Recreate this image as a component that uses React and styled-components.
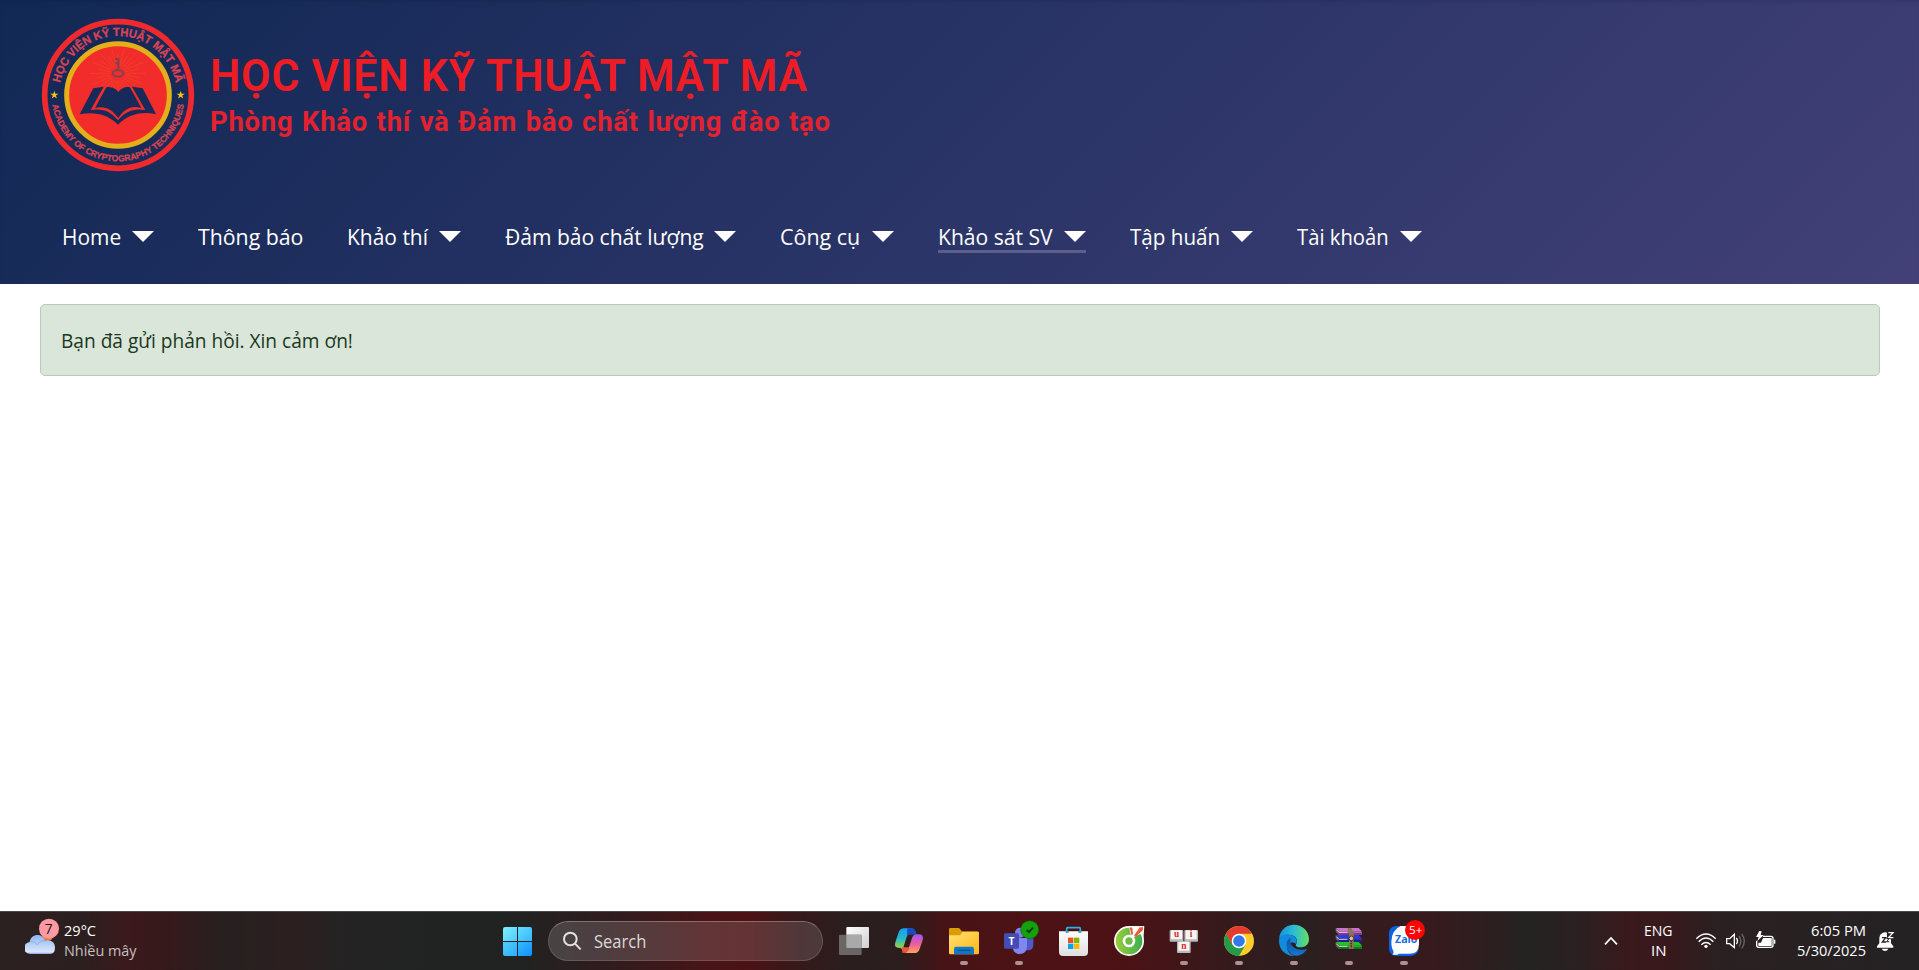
import React, { useLayoutEffect, useRef, useState } from "react";
import styled, { createGlobalStyle } from "styled-components";

const GlobalStyle = createGlobalStyle`
  * { box-sizing: border-box; }
  html, body, #root { height: 100%; }
  body {
    margin: 0;
    overflow: hidden;
    background: #fff;
    font-family: "Open Sans", "Noto Sans", sans-serif;
  }
`;

const Page = styled.div`
  height: 970px;
  display: flex;
  flex-direction: column;
`;

/* A line of text condensed or widened to an exact width. */
const FitBox = styled.span`
  display: inline-block;
  flex: none;
  width: ${(p) => p.$w}px;
  white-space: nowrap;
`;
const FitInner = styled.span`
  display: inline-block;
  transform-origin: left;
`;
function Fit({ w, children }) {
  const ref = useRef(null);
  const [scale, setScale] = useState(1);
  useLayoutEffect(() => {
    if (ref.current) setScale(w / ref.current.offsetWidth);
  }, [w]);
  return (
    <FitBox $w={w}>
      <FitInner ref={ref} style={{ transform: `scaleX(${scale})` }}>
        {children}
      </FitInner>
    </FitBox>
  );
}

const Header = styled.header`
  flex: none;
  height: 284px;
  padding: 10px 30px 0;
  display: flex;
  flex-direction: column;
  background: linear-gradient(135deg, #112855, #424077);
  box-shadow: inset 0 5px 5px -4px rgba(0, 0, 0, 0.14);
`;
const Brand = styled.div`
  display: flex;
  height: 170px;
`;
const Seal = styled.svg`
  flex: none;
  width: 180px;
  height: 170px;
`;
const BrandText = styled.div`
  display: flex;
  flex-direction: column;
  padding-top: 38px;
  font-family: Roboto, sans-serif;
  color: #ee1c25;
`;
const Title = styled.div`
  font-size: 45px;
  line-height: 56px;
  font-weight: 600;
  letter-spacing: 0.8px;
`;
const Subtitle = styled.div`
  font-size: 28.5px;
  line-height: 34px;
  margin-top: 1px;
  font-weight: 700;
  letter-spacing: 0.8px;
  word-spacing: 1px;
  color: #e4222f;
`;
const Nav = styled.nav`
  display: flex;
  gap: 44px;
  padding: 42px 0 0 32px;
`;
const NavItem = styled.a`
  display: flex;
  align-items: center;
  justify-content: space-between;
  width: ${(p) => p.$w}px;
  height: 31px;
  border-bottom: 3px solid ${(p) => (p.$active ? "#5c5f8d" : "transparent")};
  color: #fff;
  font-size: 22px;
  line-height: 28px;
`;
const Caret = styled.i`
  border: 11px solid transparent;
  border-top: 11px solid #fff;
  border-bottom: 0;
`;

const Main = styled.main`
  flex: 1;
  padding: 20px 39px 0 40px;
`;
const Alert = styled.div`
  height: 72px;
  padding: 0 20px;
  display: flex;
  align-items: center;
  border: 1px solid #b5cdb7;
  border-radius: 5px;
  background: #dae6da;
  color: #1b3820;
  font-size: 19.5px;
`;

const Taskbar = styled.footer`
  flex: none;
  height: 59px;
  display: flex;
  border-top: 1px solid #474a45;
  color: #fff;
  background: linear-gradient(
    90deg,
    #2b2120 0, #2c1f1f 80px, #3b191c 130px, #34191b 170px, #272020 225px,
    #2c1f20 290px, #232323 350px, #212222 520px, #301c1e 610px, #491417 710px,
    #4c1215 750px, #35191b 800px, #2a1e1e 850px, #2c1d1e 900px, #471316 945px,
    #4d1215 1040px, #4b1216 1130px, #3d171a 1190px, #331b1d 1240px,
    #2b1f20 1310px, #371a1d 1390px, #371a1d 1430px, #242222 1530px,
    #2a2021 1580px, #3b191c 1630px, #37191c 1670px, #2a2022 1720px,
    #242223 1919px
  );
`;
const Weather = styled.div`
  display: flex;
  width: 503px;
  padding-left: 25px;
`;
const WeatherIcon = styled.svg`
  width: 39px;
  height: 58px;
`;
const Lines = styled.div`
  display: flex;
  flex-direction: column;
  align-items: ${(p) => p.$align};
  padding-top: 8px;
  font-size: 15px;
  line-height: 20px;
`;
const Muted = styled.span`
  color: #c6c0c0;
`;
const Start = styled.div`
  display: grid;
  grid-template-columns: 14px 14px;
  grid-template-rows: 14px 14px;
  gap: 1px;
  padding-top: 15px;
  width: 45px;
`;
const Pane = styled.i`
  background: ${(p) => p.$bg};
  border-radius: ${(p) => p.$r};
`;
const Search = styled.div`
  display: flex;
  align-items: center;
  width: 275px;
  height: 40px;
  margin: 9px 3px 0 0;
  padding-left: 14px;
  gap: 12px;
  border: 1px solid #ffffff22;
  border-top-color: #ffffff44;
  border-radius: 20px;
  background: linear-gradient(90deg, #ffffff28, #ffffff22);
  color: #ded8d8;
  font-size: 17.5px;
`;
const Apps = styled.div`
  display: flex;
`;
const AppIcon = styled.svg`
  width: 55px;
  height: 59px;
  margin-top: -1px;
`;
const Tray = styled.div`
  display: flex;
  margin-left: 149px;
`;
const TrayIcons = styled.svg`
  width: ${(p) => p.$w}px;
  height: 59px;
  margin-top: -1px;
`;

const NAV = [
  ["Home", 91.5, 59],
  ["Thông báo", 105.5, 105.5],
  ["Khảo thí", 113.5, 81],
  ["Đảm bảo chất lượng", 231.5, 199],
  ["Công cụ", 114, 80],
  ["Khảo sát SV", 148, 115],
  ["Tập huấn", 123, 90],
  ["Tài khoản", 125, 92],
];

const star = (x, y) => {
  const pts = [];
  for (let i = 0; i < 10; i++) {
    const r = i % 2 ? 5 : 13;
    const a = (Math.PI * i) / 5 - Math.PI / 2;
    pts.push(`${x + r * Math.cos(a)},${y + r * Math.sin(a)}`);
  }
  return pts.join(" ");
};

function AcademySeal() {
  return (
    <Seal viewBox="0 0 540 510">
      <defs>
        <path id="arcTop" d="M87 255 A177 177 0 0 1 441 255" />
        <path id="arcBottom" d="M65 255 A199 199 0 0 0 463 255" />
      </defs>
      <circle cx="264" cy="255" r="220" fill="none" stroke="#ef2a2e" strokeWidth="17" />
      <circle cx="264" cy="255" r="154" fill="#f12c2b" stroke="#e3b01b" strokeWidth="15" />
      <g stroke="#ee5a2b" strokeWidth="2" opacity=".6">
        {Array.from({ length: 28 }, (_, i) => {
          const a = (i * Math.PI) / 14;
          const r = i % 2 ? 65 : 85;
          return (
            <line
              key={i}
              x1={264 + 24 * Math.cos(a)}
              y1={190 + 24 * Math.sin(a)}
              x2={264 + r * Math.cos(a)}
              y2={190 + r * 0.9 * Math.sin(a)}
            />
          );
        })}
      </g>
      <g fill="none" stroke="#7d4450" strokeWidth="6">
        <ellipse cx="264" cy="190" rx="16" ry="10" />
        <path d="M265 182V146M266 147H255M265 160H256" />
      </g>
      <path
        fill="#182a59"
        d="M229 232C244 228 258 236 265 246C272 235 288 228 300 232L334 294C304 284 282 297 265 324C246 298 224 286 195 294Z"
      />
      <path
        fill="#182a59"
        d="M190 235L221 230L182 300C220 294 244 306 264 331C286 304 312 294 346 300L306 230L338 235L378 313C334 302 292 314 264 344C236 314 194 304 149 313Z"
      />
      <g
        fill="#d94455"
        stroke="#d94455"
        strokeWidth="0.9"
        fontFamily="Liberation Sans, sans-serif"
        fontWeight="700"
      >
        <text fontSize="35">
          <textPath href="#arcTop" startOffset="36" textLength="484" lengthAdjust="spacingAndGlyphs">
            HỌC VIỆN KỸ THUẬT MẬT MÃ
          </textPath>
        </text>
        <text fontSize="26">
          <textPath href="#arcBottom" startOffset="29" textLength="568" lengthAdjust="spacingAndGlyphs">
            ACADEMY OF CRYPTOGRAPHY TECHNIQUES
          </textPath>
        </text>
      </g>
      <polygon points={star(73, 255)} fill="#f5c21a" />
      <polygon points={star(452, 255)} fill="#f5c21a" />
    </Seal>
  );
}

const Running = ({ x }) => (
  <rect x={x - 12} y="168" width="24" height="12" rx="6" fill="#ae9093" />
);

function AppIcons() {
  return (
    <Apps>
      <AppIcon viewBox="18 18 165 177">
        <defs>
          <linearGradient id="tv" x2="1" y2="1">
            <stop stopColor="#fff" /><stop offset="1" stopColor="#cfcfcf" />
          </linearGradient>
        </defs>
        <rect x="79" y="66" width="68" height="63" rx="3" fill="url(#tv)" />
        <rect x="57" y="89" width="68" height="61" rx="3" fill="#6a6666" />
        <path d="M79 89H125V129H82Q79 129 79 126Z" fill="#a9a9a9" />
      </AppIcon>
      <AppIcon viewBox="183 18 165 177">
        <defs>
          <linearGradient id="cpa" x2="0" y2="1">
            <stop stopColor="#1b9cf0" /><stop offset=".4" stopColor="#22b8d0" />
            <stop offset=".7" stopColor="#7ccc5c" /><stop offset="1" stopColor="#f4cf30" />
          </linearGradient>
          <linearGradient id="cpb" x2="0" y2="1">
            <stop stopColor="#9b57f5" /><stop offset=".5" stopColor="#ec5b9c" />
            <stop offset="1" stopColor="#ffa35c" />
          </linearGradient>
        </defs>
        <path d="M262 70H275Q286 71 289 88L270 88Q262 89 259 99L247 137Q245 144 254 144Q247 143 245 131Q242 128 234 128Q222 128 226 112L236 82Q240 70 252 70Z" fill="url(#cpa)" />
        <path d="M262 70H275Q286 71 289 88L270 88Q264 88 261 94Z" fill="#1748c6" />
        <path d="M289 88H299Q312 89 308 106L298 134Q294 144 283 144H254Q262 143 266 130L276 99Q280 88 289 88Z" fill="url(#cpb)" />
        <path d="M245 127H267Q263 144 254 144Q247 143 245 127Z" fill="#f0563b" />
      </AppIcon>
      <AppIcon viewBox="348 18 165 177">
        <defs>
          <linearGradient id="fold" x2="1" y2="1">
            <stop stopColor="#ffe173" /><stop offset="1" stopColor="#fbb616" />
          </linearGradient>
        </defs>
        <path d="M387 73Q387 69 391 69H415Q419 69 422 74L425 79H472Q477 79 477 84V100H387Z" fill="#dc9c08" />
        <path d="M387 91H417Q421 91 424 86L427 81H473Q477 81 477 85V144Q477 148 473 148H391Q387 148 387 144Z" fill="url(#fold)" />
        <path d="M402 148V132Q402 125 409 125H455Q462 125 462 132V148Z" fill="#0f78c9" />
        <rect x="412" y="134" width="40" height="4" rx="2" fill="#0b4d8e" />
        <Running x={432} />
      </AppIcon>
      <AppIcon viewBox="513 18 165 177">
        <circle cx="600" cy="83" r="15" fill="#7b83eb" />
        <path d="M616 97H640V119Q640 136 624 136H612Z" fill="#5059c9" />
        <path d="M578 99H621V127Q619 147 600 147Q580 147 578 127Z" fill="#7f87ee" />
        <rect x="552" y="85" width="45" height="46" rx="4" fill="#444db5" />
        <text x="574.5" y="119" fill="#fff" fontSize="31" fontWeight="700" textAnchor="middle">T</text>
        <circle cx="629" cy="74" r="27" fill="#13a10e" stroke="#0b5f0b" strokeWidth="1.5" />
        <path d="M620 75L627 81L639 68" fill="none" stroke="#092e09" strokeWidth="5" />
        <Running x={597} />
      </AppIcon>
      <AppIcon viewBox="678 18 165 177">
        <defs>
          <linearGradient id="store" x2="0" y2="1">
            <stop stopColor="#fff" /><stop offset="1" stopColor="#dedede" />
          </linearGradient>
        </defs>
        <path d="M740 82V71Q740 68 743 68H778Q781 68 781 71V82" fill="none" stroke="#27b5ea" strokeWidth="5" />
        <path d="M717 79H804V141Q804 153 792 153H729Q717 153 717 141Z" fill="url(#store)" />
        <path d="M737 79H746V83H737ZM775 79H784V83H775Z" fill="#1688bd" />
        <rect x="744" y="98" width="16" height="16" fill="#f04f23" />
        <rect x="762" y="98" width="16" height="16" fill="#7db900" />
        <rect x="744" y="116" width="16" height="16" fill="#06a3ee" />
        <rect x="762" y="116" width="16" height="16" fill="#fdb800" />
      </AppIcon>
      <AppIcon viewBox="843 18 165 177">
        <defs>
          <linearGradient id="coc" x2="1">
            <stop stopColor="#9bcd3a" /><stop offset="1" stopColor="#3dae50" />
          </linearGradient>
        </defs>
        <circle cx="927" cy="108" r="45" fill="#fff" />
        <path d="M932 64H973L970 104H932Z" fill="#fff" />
        <circle cx="927" cy="108" r="40" fill="url(#coc)" />
        <path d="M934 100L927 64H972L968 84Z" fill="#fff" />
        <path d="M929 67L937 68L939 86L935 92ZM959 67L969 67L969 75L948 95L942 92Z" fill="#ee5a3a" />
        <circle cx="927" cy="108" r="15" fill="#6fbd46" stroke="#fff" strokeWidth="8" />
      </AppIcon>
      <AppIcon viewBox="78 18 165 177">
        {[["u", 119, 75], ["i", 163, 75], ["n", 141, 109]].map(([c, x, y]) => (
          <g key={c}>
            <rect x={x} y={y} width="41" height="35" rx="3" fill="#b9b9b9" />
            <rect x={x + 4} y={y + 1} width="33" height="27" rx="3" fill="#f5f5f5" />
            <text x={x + 20.5} y={y + 22} fontSize="28" fontWeight="700" fill="#e02a2a" textAnchor="middle" fontFamily="Liberation Serif, serif">{c}</text>
          </g>
        ))}
        <Running x={162} />
      </AppIcon>
      <AppIcon viewBox="243 18 165 177">
        <circle cx="327" cy="108" r="45" fill="#fccb2c" />
        <path d="M288 85.500A45 45 0 0 0 327 153L346.500 119.300L307.500 119.300Z" fill="#259b48" />
        <path d="M288 85.500Q305 62 327 63Q352 63 366 86H327L307 119Z" fill="#e33b2e" />
        <circle cx="327" cy="108" r="22" fill="#fff" />
        <circle cx="327" cy="108" r="17.500" fill="#2f79e8" />
        <Running x={327} />
      </AppIcon>
      <AppIcon viewBox="408 18 165 177">
        <defs>
          <linearGradient id="edgeA" x2="1">
            <stop stopColor="#168fdf" /><stop offset=".5" stopColor="#2bbdd5" />
            <stop offset="1" stopColor="#65df62" />
          </linearGradient>
          <linearGradient id="edgeB" x2="0" y2="1">
            <stop stopColor="#0b529f" /><stop offset="1" stopColor="#1477cf" />
          </linearGradient>
        </defs>
        <path d="M447 106A45 45 0 0 1 537 102C537 119 525 127 512 127C500 127 494 122 499 116C504 108 500 94 484 91C465 86 447 96 447 106Z" fill="url(#edgeA)" />
        <path d="M447 106C449 92 464 84 481 89C498 93 505 107 498 117C489 110 475 111 472 124C469 139 482 151 496 153C467 155 446 134 447 106Z" fill="#138bdc" />
        <path d="M482 98C471 103 467 116 471 128C476 144 488 151 500 152C514 150 526 142 531 131C515 138 486 134 481 111Q481 103 482 98Z" fill="url(#edgeB)" />
        <Running x={492} />
      </AppIcon>
      <AppIcon viewBox="573 18 165 177">
        {[["#c673c9", "#82397e", 69], ["#3039df", "#171b8e", 90], ["#21c427", "#0a7e13", 111]].map(([a, b, y]) => (
          <g key={y}>
            <path d={`M617 ${y}H686L695 ${y + 10}H626Z`} fill={a} />
            <path d={`M617 ${y}L626 ${y + 10}V${y + 21}L617 ${y + 12}Z`} fill="#6b5560" />
            <rect x="626" y={y + 10} width="69" height="11" fill={a} />
            <path d={`M626 ${y + 17}H695`} stroke={b} strokeWidth="5" />
            <path d={`M619 ${y + 5}L628 ${y + 14}M628 ${y + 13}H652`} stroke="#d9cfda" strokeWidth="3" />
            <path d={`M626 ${y + 21}H695`} stroke="#29152b" strokeWidth="2" />
          </g>
        ))}
        <path d="M652 69H663L671 80V132H657V82Z" fill="#8c7351" />
        <circle cx="664" cy="100" r="7" fill="#d8c69e" stroke="#4a3a20" strokeWidth="3" />
        <path d="M664 107V130" stroke="#2b2418" strokeWidth="4" strokeDasharray="4 3" />
        <Running x={657} />
      </AppIcon>
      <AppIcon viewBox="738 18 165 177">
        <path d="M812 63H796Q777 66 777 87V130Q778 153 802 153H838Q862 152 866 134Z" fill="#0b62e4" />
        <path d="M812 63H843Q866 64 867 88V119Q866 146 838 146H808Q799 151 787 149Q793 144 790 137Q784 130 784 110Q785 75 812 63Z" fill="#fff" />
        <text x="795" y="113" fontSize="29" fontWeight="700" fill="#176be5" textLength="67" lengthAdjust="spacingAndGlyphs">Zalo</text>
        <circle cx="855" cy="75" r="30" fill="#fb0404" />
        <text x="837" y="86" fontSize="31" fill="#fff" textLength="40" lengthAdjust="spacingAndGlyphs">5+</text>
        <Running x={822} />
      </AppIcon>
    </Apps>
  );
}

function SystemTray() {
  return (
    <Tray>
      <TrayIcons $w={64} viewBox="0 18 192 177">
        <path d="M75 118L93 99L111 118" fill="none" stroke="#fff" strokeWidth="5" />
      </TrayIcons>
      <Lines $align="center">
        <Fit w={29}>ENG</Fit>
        <Fit w={15}>IN</Fit>
      </Lines>
      <TrayIcons $w={124} viewBox="279 18 372 177">
        <g fill="none" stroke="#fff" strokeWidth="4">
          <path d="M349 101Q378 73 407 101M356 110Q378 88 400 110M364 119Q378 106 392 119" />
          <path d="M440 101H449L463 88V128L449 116H440Z" />
          <path d="M469 99Q476 108 469 117" />
          <path d="M477 93Q488 108 477 124M485 87Q501 108 485 130" stroke="#6b6465" />
          <path d="M549 94H573Q579 94 579 100V121Q579 127 573 127H536Q530 127 530 121V107" />
        </g>
        <circle cx="378" cy="124" r="5" fill="#fff" />
        <path d="M549 99H575V123H535V113H543ZM582 104H586V116H582ZM538 78L528 96H536L532 108L551 90H542L545 79Z" fill="#fff" />
      </TrayIcons>
      <Lines $align="flex-end">
        <Fit w={55}>6:05 PM</Fit>
        <Fit w={69}>5/30/2025</Fit>
      </Lines>
      <TrayIcons $w={53} viewBox="858 18 159 177">
        <path d="M916 82C902 83 898 92 898 104V115L891 124V128H940V124L933 115V104L922 83Z" fill="#fff" />
        <path d="M905 131H925Q922 138 915 138Q908 138 905 131Z" fill="#fff" />
        <path d="M906 98H917L907 111H919" fill="none" stroke="#242223" strokeWidth="4" />
        <rect x="921" y="78" width="22" height="24" fill="#242223" />
        <path d="M925 83H939L926 98H940" fill="none" stroke="#fff" strokeWidth="4" />
        <path d="M919 101H927L920 110H928" fill="none" stroke="#242223" strokeWidth="3" />
      </TrayIcons>
    </Tray>
  );
}

export default function App() {
  return (
    <Page>
      <GlobalStyle />
      <Header>
        <Brand>
          <AcademySeal />
          <BrandText>
            <Title><Fit w={598}>HỌC VIỆN KỸ THUẬT MẬT MÃ</Fit></Title>
            <Subtitle><Fit w={621}>Phòng Khảo thí và Đảm bảo chất lượng đào tạo</Fit></Subtitle>
          </BrandText>
        </Brand>
        <Nav>
          {NAV.map(([label, w, tw]) => (
            <NavItem key={label} $w={w} $active={label === "Khảo sát SV"}>
              <Fit w={tw}>{label}</Fit>
              {tw < w && <Caret />}
            </NavItem>
          ))}
        </Nav>
      </Header>
      <Main>
        <Alert><Fit w={292}>Bạn đã gửi phản hồi. Xin cảm ơn!</Fit></Alert>
      </Main>
      <Taskbar>
        <Weather>
          <WeatherIcon viewBox="75 21 117 174">
            <defs>
              <linearGradient id="cloud" x2="0" y2="1">
                <stop stopColor="#8fb4f0" /><stop offset=".9" stopColor="#dbe7fb" />
                <stop offset="1" stopColor="#7fa2de" />
              </linearGradient>
            </defs>
            <circle cx="143" cy="91" r="17" fill="#f47a1c" />
            <path d="M92 147A17 17 0 0 1 89 111C93 84 128 83 135 107C153 103 165 112 165 128Q165 147 148 147Z" fill="url(#cloud)" />
            <path d="M89 111Q103 106 112 119Q122 105 139 107" fill="none" stroke="#7ba3e2" strokeWidth="2" />
            <circle cx="147" cy="71" r="30" fill="#ff99a4" />
            <text x="146" y="86" fontSize="41" fill="#201012" textAnchor="middle">7</text>
          </WeatherIcon>
          <Lines $align="flex-start">
            <Fit w={32}>29°C</Fit>
            <Muted><Fit w={73}>Nhiều mây</Fit></Muted>
          </Lines>
        </Weather>
        <Start>
          <Pane $bg="linear-gradient(135deg,#7df0ff,#50cbfc)" $r="2px 0 0 0" />
          <Pane $bg="linear-gradient(135deg,#60dcff,#36b8fb)" $r="0 2px 0 0" />
          <Pane $bg="linear-gradient(135deg,#52ccfd,#2caefa)" $r="0 0 0 2px" />
          <Pane $bg="linear-gradient(135deg,#37b9fb,#0f93fa)" $r="0 0 2px 0" />
        </Start>
        <Search>
          <svg width="19" height="20" viewBox="248 79 57 60" fill="none" stroke="#e6e0e0" strokeWidth="6">
            <circle cx="270" cy="103" r="19" />
            <path d="M284 117L301 134" />
          </svg>
          <Fit w={52}>Search</Fit>
        </Search>
        <AppIcons />
        <SystemTray />
      </Taskbar>
    </Page>
  );
}
